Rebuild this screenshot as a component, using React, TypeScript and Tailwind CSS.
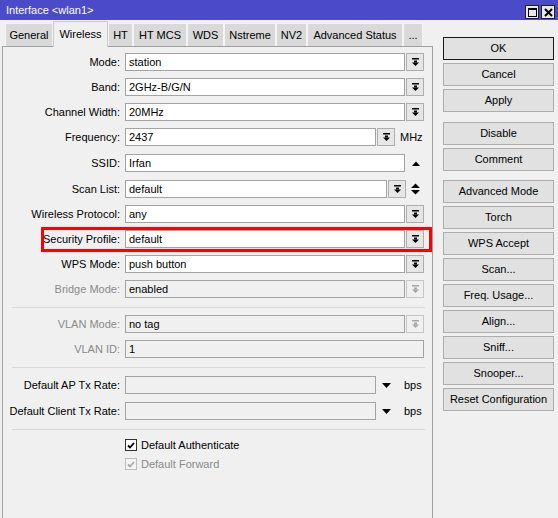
import type { ReactNode } from "react";

function DropIcon({ disabled }: { disabled?: boolean }) {
    return (
        <svg width="7" height="8" viewBox="0 0 7 8" className={disabled ? "fill-[#a6a6a6]" : "fill-black"}>
            <rect x="0" y="0" width="7" height="1.5" />
            <rect x="2" y="2.5" width="3" height="2" />
            <path d="M0 4.5h7L3.5 8z" />
        </svg>
    );
}

function DropButton({ disabled }: { disabled?: boolean }) {
    return (
        <div
            className={
                disabled
                    ? "ml-[1px] flex h-[18px] w-[18px] shrink-0 items-center justify-center border border-[#c6c6c6] bg-[#f0f0f0]"
                    : "ml-[1px] flex h-[18px] w-[18px] shrink-0 items-center justify-center border border-[#adadad] bg-[#e6e6e6]"
            }
        >
            <DropIcon disabled={disabled} />
        </div>
    );
}

function Label({ children, gray }: { children: ReactNode; gray?: boolean }) {
    return (
        <div className={gray ? "w-[117px] shrink-0 text-right text-[#8a8a8a]" : "w-[117px] shrink-0 text-right text-black"}>
            {children}
        </div>
    );
}

function Row({ className, children }: { className: string; children: ReactNode }) {
    return <div className={`flex h-[18px] items-center ${className}`}>{children}</div>;
}

const inputBase = "ml-[5px] h-[18px] shrink-0 border border-[#a3a3a3] px-[3px] leading-[16px]";

function Separator({ className }: { className: string }) {
    return <div className={`ml-[9px] h-px w-[413px] bg-[#d8d8d8] ${className}`} />;
}

function Check({ label, disabled, className }: { label: string; disabled?: boolean; className: string }) {
    return (
        <div className={`flex h-[12px] items-center ${className}`}>
            <div className="w-[117px] shrink-0" />
            <div
                className={
                    disabled
                        ? "ml-[5px] flex h-[12px] w-[12px] items-center justify-center border border-[#bdbdbd] bg-[#f4f4f4]"
                        : "ml-[5px] flex h-[12px] w-[12px] items-center justify-center border border-[#333] bg-white"
                }
            >
                <svg width="8" height="7" viewBox="0 0 8 7">
                    <path
                        d="M1 3.5l2 2L7 1"
                        fill="none"
                        strokeWidth="1.8"
                        className={disabled ? "stroke-[#a8a8a8]" : "stroke-black"}
                    />
                </svg>
            </div>
            <span className={disabled ? "ml-[4px] text-[#8a8a8a]" : "ml-[4px] text-black"}>{label}</span>
        </div>
    );
}

function SideButton({ children, className = "", primary }: { children: ReactNode; className?: string; primary?: boolean }) {
    return (
        <div
            className={`flex h-[23px] w-[111px] items-center justify-center border bg-[#e1e1e1] text-black ${
                primary ? "border-[#1a1a1a]" : "border-[#adadad]"
            } ${className}`}
        >
            {children}
        </div>
    );
}

const tabs = [
    { name: "General", w: "w-[48px]" },
    { name: "Wireless", w: "w-[55px]", active: true },
    { name: "HT", w: "w-[25px]" },
    { name: "HT MCS", w: "w-[54px]" },
    { name: "WDS", w: "w-[37px]" },
    { name: "Nstreme", w: "w-[52px]" },
    { name: "NV2", w: "w-[31px]" },
    { name: "Advanced Status", w: "w-[96px]" },
    { name: "...", w: "w-[20px]" },
];

export default function App() {
    return (
        <div className="relative h-[518px] w-[558px] overflow-hidden bg-[#f0f0f0] font-['Liberation_Sans',Arial,sans-serif] text-[11px] text-black">
            {/* Title bar */}
            <div className="flex h-[20px] items-center justify-between bg-[#4b4bc9] pl-[6px] pr-[3px]">
                <span className="text-[11px] text-white">Interface &lt;wlan1&gt;</span>
                <div className="flex gap-[2px] pt-[4px]">
                    <div className="flex h-[14px] w-[14px] items-center justify-center border border-[#222] bg-[#e8e8e8]">
                        <div className="h-[9px] w-[9px] border border-t-2 border-black" />
                    </div>
                    <div className="flex h-[14px] w-[14px] items-center justify-center border border-[#222] bg-[#e8e8e8]">
                        <svg width="9" height="9" viewBox="0 0 9 9">
                            <path d="M1 1l7 7M8 1l-7 7" stroke="black" strokeWidth="2" />
                        </svg>
                    </div>
                </div>
            </div>

            <div className="flex">
                {/* Left: tabs + panel */}
                <div className="ml-[2px] w-[431px] shrink-0">
                    <div className="flex h-[26px] items-end pl-[3px]">
                        {tabs.map((t) =>
                            t.active ? (
                                <div
                                    key={t.name}
                                    className={`relative z-10 -mb-px flex h-[26px] shrink-0 items-start justify-center border border-b-0 border-[#c9c9c9] bg-[#f0f0f0] pt-[4px] ${t.w}`}
                                >
                                    {t.name}
                                </div>
                            ) : (
                                <div
                                    key={t.name}
                                    className={`flex h-[23px] shrink-0 items-center justify-center border border-b-0 border-[#f4f4f4] bg-[#d9d9d9] ${t.w}`}
                                >
                                    {t.name}
                                </div>
                            ),
                        )}
                    </div>

                    <div className="flex h-[480px] flex-col border border-b-0 border-[#a0a0a0] pl-0">
                        <Row className="mt-[6px]">
                            <Label>Mode:</Label>
                            <div className={`${inputBase} w-[280px] bg-white`}>station</div>
                            <DropButton />
                        </Row>
                        <Row className="mt-[7px]">
                            <Label>Band:</Label>
                            <div className={`${inputBase} w-[280px] bg-white`}>2GHz-B/G/N</div>
                            <DropButton />
                        </Row>
                        <Row className="mt-[7px]">
                            <Label>Channel Width:</Label>
                            <div className={`${inputBase} w-[280px] bg-white`}>20MHz</div>
                            <DropButton />
                        </Row>
                        <Row className="mt-[7px]">
                            <Label>Frequency:</Label>
                            <div className={`${inputBase} w-[251px] bg-white`}>2437</div>
                            <DropButton />
                            <span className="ml-[5px]">MHz</span>
                        </Row>
                        <Row className="mt-[8px]">
                            <Label>SSID:</Label>
                            <div className={`${inputBase} w-[280px] bg-white`}>Irfan</div>
                            <svg width="8" height="5" viewBox="0 0 8 5" className="ml-[7px]">
                                <path d="M0 5L4 0.5 8 5z" fill="black" />
                            </svg>
                        </Row>
                        <Row className="mt-[8px]">
                            <Label>Scan List:</Label>
                            <div className={`${inputBase} w-[262px] bg-white`}>default</div>
                            <DropButton />
                            <svg width="9" height="12" viewBox="0 0 9 12" className="ml-[5px]">
                                <path d="M0 5L4.5 0.5 9 5zM0 7h9L4.5 11.5z" fill="black" />
                            </svg>
                        </Row>
                        <Row className="mt-[7px]">
                            <Label>Wireless Protocol:</Label>
                            <div className={`${inputBase} w-[280px] bg-white`}>any</div>
                            <DropButton />
                        </Row>
                        <Row className="mt-[7px]">
                            <Label>Security Profile:</Label>
                            <div className={`${inputBase} w-[280px] bg-white`}>default</div>
                            <DropButton />
                        </Row>
                        <Row className="mt-[7px]">
                            <Label>WPS Mode:</Label>
                            <div className={`${inputBase} w-[280px] bg-white`}>push button</div>
                            <DropButton />
                        </Row>
                        <Row className="mt-[7px]">
                            <Label gray>Bridge Mode:</Label>
                            <div className={`${inputBase} w-[280px] bg-[#f0f0f0]`}>enabled</div>
                            <DropButton disabled />
                        </Row>

                        <Separator className="mt-[9px]" />

                        <Row className="mt-[7px]">
                            <Label gray>VLAN Mode:</Label>
                            <div className={`${inputBase} w-[280px] bg-[#f0f0f0]`}>no tag</div>
                            <DropButton disabled />
                        </Row>
                        <Row className="mt-[7px]">
                            <Label gray>VLAN ID:</Label>
                            <div className={`${inputBase} w-[299px] bg-[#f0f0f0]`}>1</div>
                        </Row>

                        <Separator className="mt-[9px]" />

                        <Row className="mt-[8px]">
                            <Label>Default AP Tx Rate:</Label>
                            <div className={`${inputBase} w-[251px] bg-[#f0f0f0]`} />
                            <svg width="9" height="5" viewBox="0 0 9 5" className="ml-[6px]">
                                <path d="M0 0h9L4.5 5z" fill="black" />
                            </svg>
                            <span className="ml-[13px]">bps</span>
                        </Row>
                        <Row className="mt-[8px]">
                            <Label>Default Client Tx Rate:</Label>
                            <div className={`${inputBase} w-[251px] bg-[#f0f0f0]`} />
                            <svg width="9" height="5" viewBox="0 0 9 5" className="ml-[6px]">
                                <path d="M0 0h9L4.5 5z" fill="black" />
                            </svg>
                            <span className="ml-[13px]">bps</span>
                        </Row>

                        <Separator className="mt-[9px]" />

                        <Check className="mt-[9px]" label="Default Authenticate" />
                        <Check className="mt-[7px]" label="Default Forward" disabled />
                    </div>
                </div>

                {/* Right: action buttons */}
                <div className="ml-[10px] flex flex-col pt-[17px]">
                    <SideButton primary>OK</SideButton>
                    <SideButton className="mt-[3px]">Cancel</SideButton>
                    <SideButton className="mt-[3px]">Apply</SideButton>
                    <SideButton className="mt-[10px]">Disable</SideButton>
                    <SideButton className="mt-[3px]">Comment</SideButton>
                    <SideButton className="mt-[9px]">Advanced Mode</SideButton>
                    <SideButton className="mt-[3px]">Torch</SideButton>
                    <SideButton className="mt-[3px]">WPS Accept</SideButton>
                    <SideButton className="mt-[3px]">Scan...</SideButton>
                    <SideButton className="mt-[3px]">Freq. Usage...</SideButton>
                    <SideButton className="mt-[3px]">Align...</SideButton>
                    <SideButton className="mt-[3px]">Sniff...</SideButton>
                    <SideButton className="mt-[3px]">Snooper...</SideButton>
                    <SideButton className="mt-[3px]">Reset Configuration</SideButton>
                </div>
            </div>

            {/* Highlight annotation */}
            <div className="pointer-events-none absolute left-[41px] top-[227px] h-[25px] w-[391px] border-[3px] border-[#ff0000]" />
        </div>
    );
}
